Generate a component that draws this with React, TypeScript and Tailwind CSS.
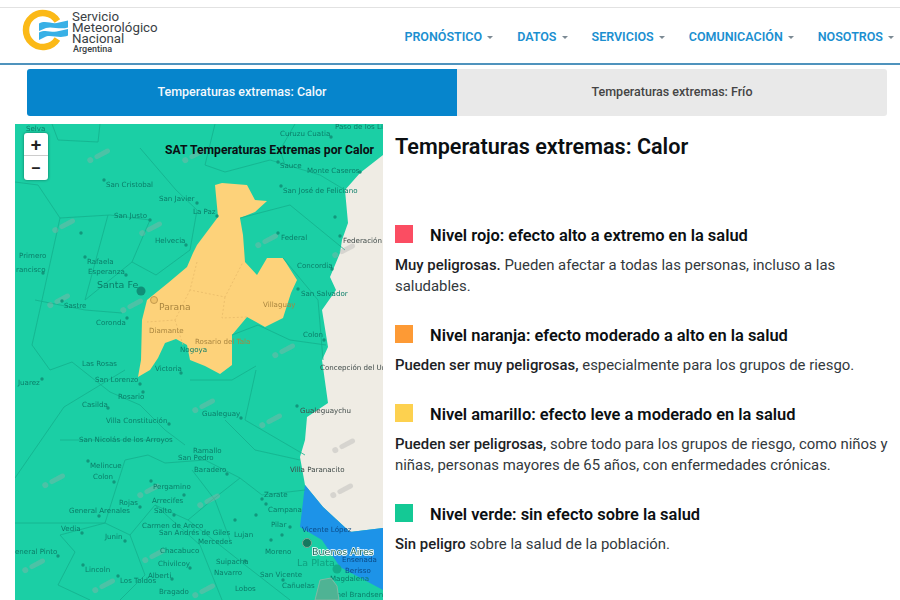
const navItems = ["PRONÓSTICO", "DATOS", "SERVICIOS", "COMUNICACIÓN", "NOSOTROS"]

const levels = [
	{
		color: "bg-[#fb4d62]",
		title: "Nivel rojo: efecto alto a extremo en la salud",
		bold: "Muy peligrosas.",
		text: " Pueden afectar a todas las personas, incluso a las saludables.",
		className: "",
	},
	{
		color: "bg-[#fd9a35]",
		title: "Nivel naranja: efecto moderado a alto en la salud",
		bold: "Pueden ser muy peligrosas,",
		text: " especialmente para los grupos de riesgo.",
		className: "mt-[28px]",
	},
	{
		color: "bg-[#fdd14f]",
		title: "Nivel amarillo: efecto leve a moderado en la salud",
		bold: "Pueden ser peligrosas,",
		text: " sobre todo para los grupos de riesgo, como niños y niñas, personas mayores de 65 años, con enfermedades crónicas.",
		className: "mt-[28px]",
	},
	{
		color: "bg-[#14c995]",
		title: "Nivel verde: sin efecto sobre la salud",
		bold: "Sin peligro",
		text: " sobre la salud de la población.",
		className: "mt-[28px]",
	},
]

// x, y (baseline), name
const greenLabels: [number, number, string][] = [
	[26, 131, "Selva"], [106, 187, "San Cristobal"], [159, 201, "San Javier"], [114, 218, "San Justo"],
	[155, 243, "Helvecia"], [19, 258, "Primero"], [16, 272, "rancisco"], [87, 264, "Rafaela"],
	[88, 274, "Esperanza"], [64, 308, "Sastre"], [96, 325, "Coronda"], [193, 214, "La Paz"],
	[280, 136, "Curuzu Cuatia"], [335, 129, "Paso de los Li"], [280, 168, "Sauce"], [307, 173, "Monte Caseros"],
	[283, 193, "San José de Feliciano"], [281, 240, "Federal"], [297, 268, "Concordia"], [301, 296, "San Salvador"],
	[303, 337, "Colon"], [82, 366, "Las Rosas"], [18, 385, "Juarez"], [95, 382, "San Lorenzo"],
	[118, 399, "Rosario"], [82, 407, "Casilda"], [155, 371, "Victoria"], [106, 423, "Villa Constitución"],
	[79, 442, "San Nicolás de los  Arroyos"], [90, 468, "Melincue"], [93, 479, "Colon"], [153, 489, "Pergamino"],
	[152, 503, "Arrecifes"], [119, 505, "Rojas"], [69, 513, "General Arenales"], [154, 513, "Salto"],
	[142, 528, "Carmen de Areco"], [159, 535, "San Andrés de Giles"], [61, 531, "Vedia"], [105, 539, "Junin"],
	[160, 553, "Chacabuco"], [15, 554, "eneral Pinto"], [158, 566, "Chivilcoy"], [85, 572, "Lincoln"],
	[148, 578, "Alberti"], [120, 583, "Los Toldos"], [159, 594, "Bragado"], [202, 416, "Gualeguay"],
	[193, 453, "Ramallo"], [178, 460, "San Pedro"], [194, 472, "Baradero"], [264, 497, "Zarate"],
	[268, 512, "Campana"], [271, 527, "Pilar"], [234, 537, "Lujan"], [198, 544, "Mercedes"],
	[265, 554, "Moreno"], [216, 564, "Suipacha"], [214, 575, "Navarro"], [260, 577, "San Vicente"],
	[330, 581, "Magdalena"], [235, 591, "Lobos"], [282, 588, "Cañuelas"], [320, 597, "Coronel Brandsen"],
]

const darkLabels: [number, number, string][] = [
	[343, 243, "Federación"], [320, 370, "Concepción del Ur"], [300, 413, "Gualeguaychu"], [290, 472, "Villa Paranacito"],
]

const brownLabels: [number, number, string][] = [
	[149, 333, "Diamante"], [195, 344, "Rosario del Tala"], [263, 307, "Villaguay"],
]

const dots: [number, number][] = [
	[104, 180], [197, 203], [150, 220], [186, 245], [43, 273], [85, 257], [126, 275], [62, 301], [127, 318],
	[81, 233], [217, 216], [331, 137], [278, 162], [360, 172], [281, 186], [335, 217], [278, 233], [340, 236],
	[332, 269], [298, 289], [324, 340], [42, 379], [140, 384], [143, 392], [108, 408], [181, 373], [169, 424],
	[88, 461], [114, 482], [151, 481], [184, 495], [140, 507], [99, 516], [174, 515], [82, 533], [125, 541],
	[58, 556], [190, 568], [83, 565], [172, 579], [118, 576], [241, 418], [297, 406], [227, 474], [262, 499],
	[266, 504], [256, 515], [235, 520], [271, 540], [282, 535], [290, 527], [245, 561], [283, 580],
]

const watermarks: [number, number][] = [
	[100, 155], [65, 225], [152, 228], [60, 300], [133, 305], [195, 155], [268, 240], [345, 250],
	[55, 480], [150, 490], [205, 405], [272, 420], [345, 445], [155, 555], [35, 565], [210, 500], [105, 585], [205, 590], [285, 350], [343, 490],
]

const borders = [
	"M52 124 L58 140 L98 142 L100 124",
	"M15 182 L38 185 L60 218 L42 300 L32 345 L50 370 L72 362 L110 392",
	"M60 218 L110 215 L150 220 L132 262 L156 275 L190 250 L197 210 L176 190 L140 148",
	"M108 215 L85 300 L132 262",
	"M35 300 L85 310 L122 313",
	"M15 478 L64 407 L125 370",
	"M15 523 L105 523 L125 460 L148 455 L165 463 L205 460 L240 478 L262 495 L305 490",
	"M60 440 L165 440",
	"M105 523 L60 535 L75 552 L58 585 L90 600",
	"M105 523 L130 535 L155 505 L188 520 L212 500 L240 478",
	"M130 535 L145 575 L120 600",
	"M155 505 L200 545 L222 600",
	"M188 520 L245 565 L290 600",
	"M215 124 L205 165 L225 172 L270 160 L320 175 L345 190",
	"M295 124 L280 150 L285 165",
	"M240 218 L290 205 L345 250",
	"M283 258 L318 300 L323 360",
	"M232 335 L258 325 L290 340 L326 345",
	"M256 370 L245 420 L305 455",
	"M190 380 L232 380 L256 366",
	"M225 420 L255 450 L300 460",
	"M192 470 L215 500 L230 540",
	"M110 392 L140 405 L165 430 L185 445",
]

function Logo() {
	return (
		<div className="mt-[1px] flex items-start self-start">
			<svg width="48" height="44" viewBox="0 0 48 44" className="ml-[21px] shrink-0">
				<path d="M36.4 12 A17 17 0 1 0 36.4 30" fill="none" stroke="#fbb917" strokeWidth="6.5" />
				<path d="M18 14.5 C25 10.5 31 16 38 13.5 L47 11.5 L47 18.5 C39 21 31 17 25 19 L18 22 Z" fill="#38b0e6" />
				<path d="M18 23.5 C25 19.5 31 24.5 38 22 L47 20 L47 26.5 C39 30 31 25.5 25 27.5 L18 31 Z" fill="#38b0e6" />
			</svg>
			<div className="ml-[3px] pt-[1.5px] text-[13.3px] leading-[11px] text-[#3a3f45]">
				<p>Servicio</p>
				<p>Meteorológico</p>
				<p>Nacional</p>
				<p className="ml-[1px] text-[9px] leading-[10px] font-medium">Argentina</p>
			</div>
		</div>
	)
}

function MapPanel() {
	return (
		<div className="relative h-[476px] w-[368px] shrink-0 overflow-hidden bg-[#1bcfa5]">
			<svg viewBox="15 124 368 476" width="368" height="476" className="block blur-[0.3px]" fontFamily="'DejaVu Sans', sans-serif">
				<path d="M383 155 L360 173 L345 190 L348 223 L342 240 L340 253 L330 277 L336 290 L322 310 L328 347 L322 360 L328 403 L307 417 L305 440 L300 457 L305 485 L323 507 L350 532 L383 528 Z" fill="#efece4" />
				<path d="M305 485 L323 507 L350 532 L383 528 L383 590 L340 567 L322 540 L300 527 Z" fill="#1d93e8" />
				<path
					d="M215 185 L222 183 L247 185 L255 200 L267 201 L255 212 L240 218 L243 235 L245 262 L257 275 L267 258 L283 258 L297 280 L291 293 L283 318 L265 327 L247 317 L232 335 L232 365 L220 374 L205 366 L190 360 L187 345 L176 339 L165 343 L158 358 L150 370 L138 377 L141 360 L142 320 L147 300 L168 283 L187 267 L193 253 L197 245 L218 217 Z"
					fill="#fdd27a"
				/>
				<g fill="none" stroke="#14b08d" strokeWidth="0.8">
					{borders.map((d) => (
						<path key={d} d={d} />
					))}
				</g>
				<path d="M197 262 L190 290 L225 297 L243 262 M190 290 L175 320 L147 322 M225 297 L222 318 L247 317 M175 320 L183 345" fill="none" stroke="#e5b767" strokeWidth="0.7" strokeDasharray="2 2" />
				<g fill="#a9a9a9" fillOpacity="0.35">
					{watermarks.map(([x, y]) => (
						<g key={`${x}-${y}`} transform={`rotate(-28 ${x} ${y})`}>
							<circle cx={x - 11} cy={y} r="3" />
							<rect x={x - 6} y={y - 2.5} width="17" height="5" rx="2.5" />
						</g>
					))}
				</g>
				<g fill="#12977c">
					{dots.map(([x, y]) => (
						<circle key={`${x}-${y}`} cx={x} cy={y} r="1.7" />
					))}
				</g>
				<circle cx="141" cy="291" r="4.5" fill="#0f8f78" />
				<circle cx="154" cy="300" r="3.5" fill="#efc268" stroke="#c49a4e" />
				<circle cx="307" cy="543" r="4.5" fill="#14795f" stroke="#7fa593" />
				<circle cx="337" cy="569" r="4.5" fill="#12ad89" />
				<g fontSize="7.1" fill="#0a7d68">
					{greenLabels.map(([x, y, name]) => (
						<text key={`${x}-${y}`} x={x} y={y}>{name}</text>
					))}
				</g>
				<g fontSize="7.1" fill="#3f4a48">
					{darkLabels.map(([x, y, name]) => (
						<text key={`${x}-${y}`} x={x} y={y}>{name}</text>
					))}
				</g>
				<g fontSize="7.1" fill="#a9853f">
					{brownLabels.map(([x, y, name]) => (
						<text key={`${x}-${y}`} x={x} y={y}>{name}</text>
					))}
				</g>
				<text x="180" y="352" fontSize="7.1" fill="#0a7d68">Nogoya</text>
				<text x="97" y="288" fontSize="9.5" fill="#0a7d68">Santa Fe</text>
				<text x="159" y="310" fontSize="9.2" fill="#a9853f">Parana</text>
				<text x="297" y="566" fontSize="9.5" fill="#0fa07f">La Plata</text>
				<text x="302" y="532" fontSize="7.1" fill="#0b4a86">Vicente López</text>
				<text x="342" y="562" fontSize="7.1" fill="#0b4a86">Ensenada</text>
				<text x="345" y="573" fontSize="7.1" fill="#0b4a86">Berisso</text>
				<text x="312" y="555" fontSize="9.5" fill="#16685c" stroke="#fff" strokeWidth="1.5" paintOrder="stroke">Buenos Aires</text>
				<path d="M315 600 L320 580 L331 578 L337 586 L339 600 Z" fill="#4fb394" stroke="#9fb7a8" strokeWidth="0.7" />
			</svg>
			<p className="absolute top-[19px] left-[150px] text-[12.2px] leading-[14px] font-bold whitespace-nowrap text-[#0a0f12]">
				SAT Temperaturas Extremas por Calor
			</p>
			<div className="absolute top-[9px] left-[9px] flex w-[24px] flex-col rounded-[3px] bg-white text-[#222] shadow-[0_0_3px_rgba(0,0,0,0.45)]">
				<span className="flex h-[23px] items-center justify-center border-b border-[#ccc] text-[19px] leading-none font-medium">+</span>
				<span className="flex h-[24px] items-center justify-center text-[19px] leading-none font-medium">−</span>
			</div>
		</div>
	)
}

export default function App() {
	return (
		<div className="h-[600px] w-[900px] overflow-hidden bg-white pt-[7px] font-['Roboto',sans-serif]">
			<header className="flex h-[58px] items-center justify-between border-t border-b-[2px] border-t-[#e2e2e2] border-b-[#4f93bd]">
				<Logo />
				<nav className="mt-[3px] flex items-center gap-[24px] pr-[6px]">
					{navItems.map((item) => (
						<a key={item} className="flex items-center gap-[5px] text-[12.5px] font-semibold text-[#1b8fd0]">
							{item}
							<span className="h-0 w-0 border-x-[3px] border-t-[3px] border-x-transparent border-t-[#7c8a94]" />
						</a>
					))}
				</nav>
			</header>

			<div className="mt-[4px] ml-[27px] flex h-[47px] w-[860px] overflow-hidden rounded-[3px] text-[12.5px] font-medium">
				<div className="flex w-[430px] items-center justify-center bg-[#0685cc] text-[#f3f8fc]">Temperaturas extremas: Calor</div>
				<div className="flex flex-1 items-center justify-center bg-[#e9e9e9] text-[#444]">Temperaturas extremas: Frío</div>
			</div>

			<main className="mt-[8px] flex pl-[15px]">
				<MapPanel />
				<section className="ml-[12px] w-[497px] text-[#33393d]">
					<h1 className="mt-[10px] text-[21.6px] leading-[26px] font-semibold text-[#0b0f12]">Temperaturas extremas: Calor</h1>
					<div className="mt-[65px]">
						{levels.map((level) => (
							<div key={level.title} className={level.className}>
								<div className="flex items-start gap-[17px]">
									<span className={`h-[18px] w-[18px] shrink-0 ${level.color}`} />
									<h2 className="text-[16.45px] leading-[22px] font-semibold text-[#0b0f12]">{level.title}</h2>
								</div>
								<p className="mt-[8px] text-[14.9px] leading-[21px]">
									<b className="font-medium text-[#1c2124]">{level.bold}</b>
									{level.text}
								</p>
							</div>
						))}
					</div>
				</section>
			</main>
		</div>
	)
}
